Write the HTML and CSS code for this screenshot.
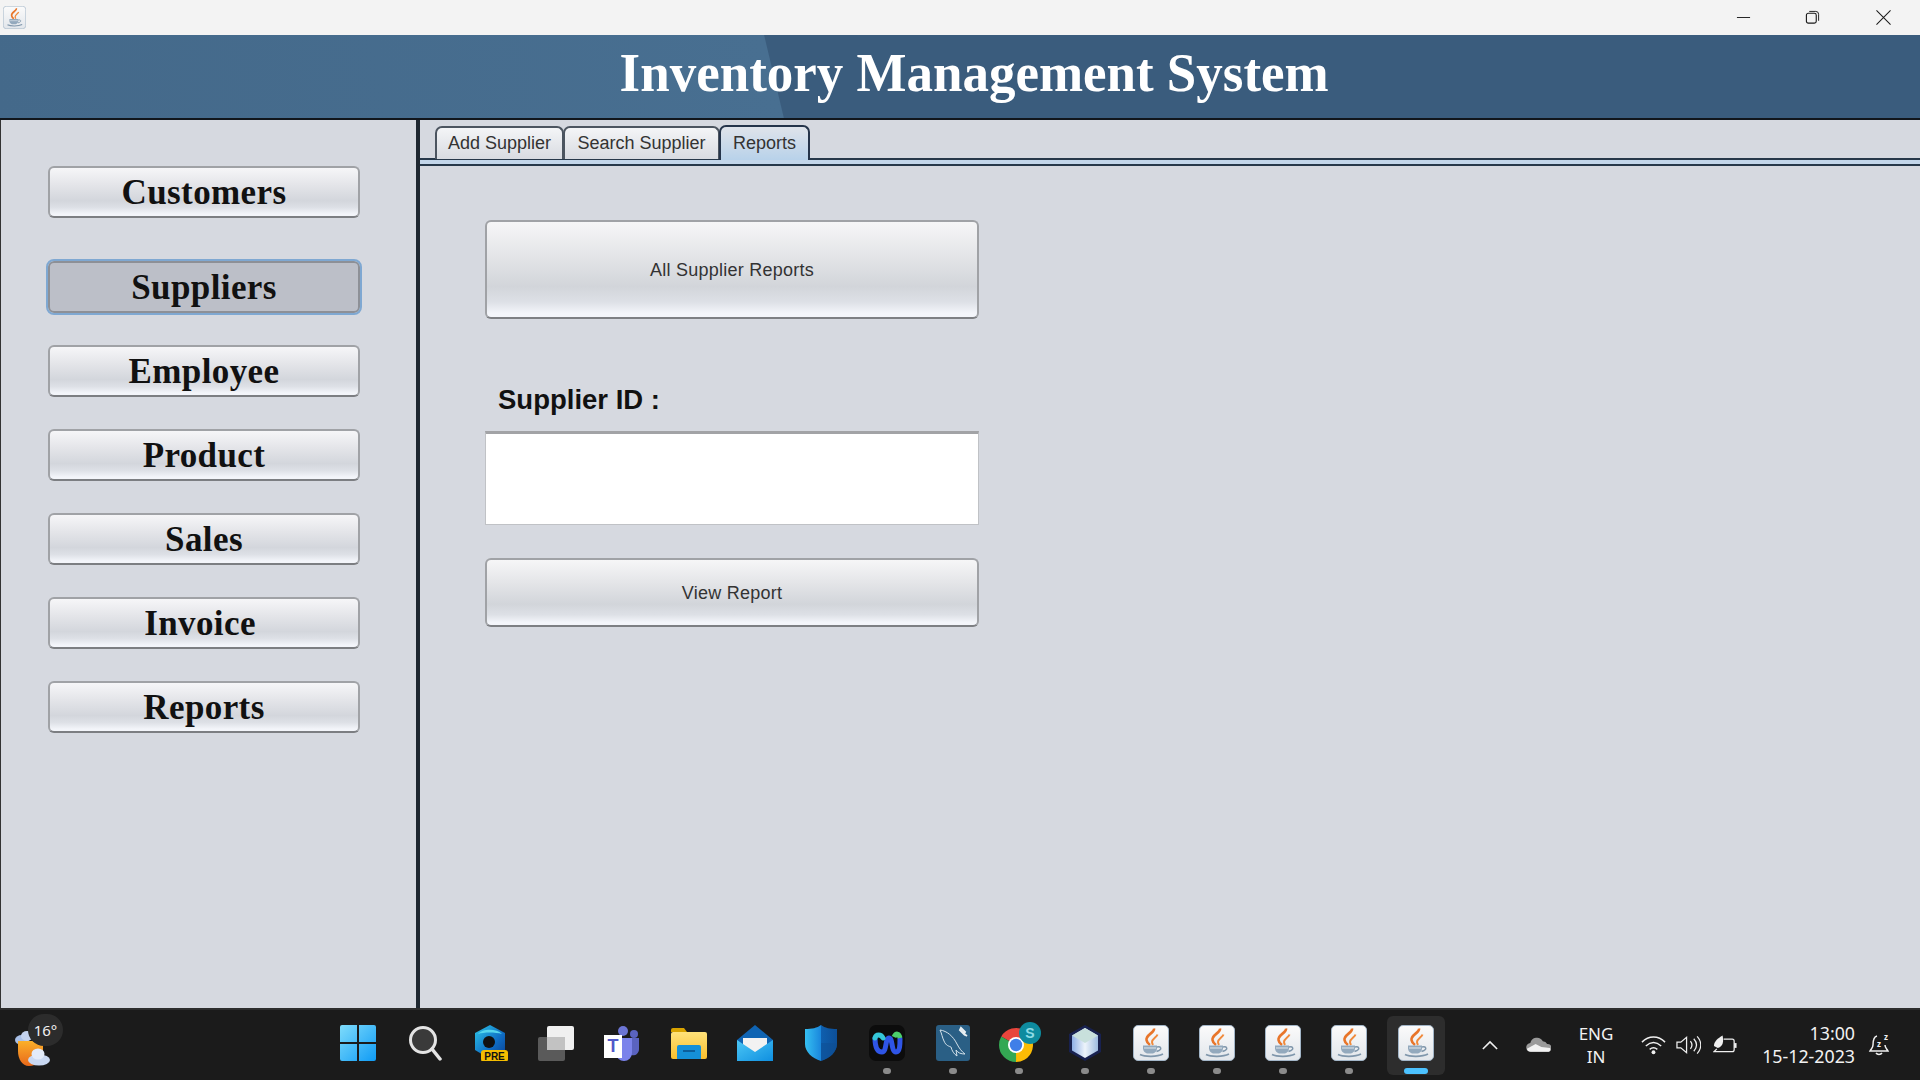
FILE: index.html
```html
<!DOCTYPE html>
<html lang="en">
<head>
<meta charset="utf-8">
<title>Inventory Management System</title>
<link rel="stylesheet" href="styles.css">
</head>
<body>
<svg class="defs" aria-hidden="true">
  <defs>
    <linearGradient id="javaBg" x1="0" y1="0" x2="0" y2="1"><stop offset="0" stop-color="#fbfbfb"/><stop offset="1" stop-color="#e2e6eb"/></linearGradient>
    <linearGradient id="winG" x1="0" y1="0" x2="1" y2="1"><stop offset="0" stop-color="#7fdcfb"/><stop offset="1" stop-color="#0f9bf5"/></linearGradient>
    <linearGradient id="edgeG" x1="0" y1="0" x2="1" y2="1"><stop offset="0" stop-color="#2dc7e8"/><stop offset=".6" stop-color="#0f6cc4"/><stop offset="1" stop-color="#0a3f8f"/></linearGradient>
    <linearGradient id="folderG" x1="0" y1="0" x2="0" y2="1"><stop offset="0" stop-color="#ffe27a"/><stop offset="1" stop-color="#fbc02d"/></linearGradient>
    <linearGradient id="mailG" x1="0" y1="0" x2="1" y2="1"><stop offset="0" stop-color="#4cc7f5"/><stop offset="1" stop-color="#0f8fe0"/></linearGradient>
    <linearGradient id="shieldG" x1="0" y1="0" x2="1" y2="0"><stop offset="0" stop-color="#35c0f2"/><stop offset=".5" stop-color="#1a86dc"/><stop offset=".5" stop-color="#0f5fae"/><stop offset="1" stop-color="#0d4f98"/></linearGradient>
    <linearGradient id="cubeG" x1="0" y1="0" x2="1" y2="0"><stop offset="0" stop-color="#8fb0e6"/><stop offset=".5" stop-color="#eef4fb"/><stop offset="1" stop-color="#9dbbe0"/></linearGradient>
    <linearGradient id="sunG" x1="0" y1="0" x2="0" y2="1"><stop offset="0" stop-color="#fbb02a"/><stop offset="1" stop-color="#e8681a"/></linearGradient>
    <symbol id="java" viewBox="0 0 36 36">
      <rect x=".5" y=".5" width="35" height="35" rx="4.500" fill="url(#javaBg)" stroke="#a3b6c8" stroke-width="1"/>
      <path d="M21 3.500c1 4-8.500 6.500-7.500 11.500 .3 2 2 4 3.500 5" fill="none" stroke="#e8752a" stroke-width="2.600"/>
      <path d="M24.500 9.500c-1 3-5.500 4-5.500 7.500 0 1 .5 2 1 3" fill="none" stroke="#f08a3c" stroke-width="2"/>
      <path d="M10 20.500h14v3c0 2.500-2 4.500-4 5h-6c-2-.5-4-2.500-4-5z" fill="#93a9bd"/>
      <path d="M11 23h12" stroke="#dfe6ec" stroke-width="1"/>
      <path d="M24 22c4-1 5 2 2 3.500l-2.500 1" fill="none" stroke="#7f96ab" stroke-width="1.400"/>
      <path d="M7 29.500c5 2.500 17 2.500 23-.5" fill="none" stroke="#7f96ab" stroke-width="1.800"/>
    </symbol>
  </defs>
</svg>
<div class="app">
  <div class="titlebar">
    <svg class="app-icon" viewBox="0 0 36 36"><use href="#java"/></svg>
    <div class="win-controls">
      <svg class="win-btn" viewBox="0 0 16 16"><path d="M1 8h14" stroke="#1a1a1a" fill="none" stroke-width="1"/></svg>
      <svg class="win-btn" viewBox="0 0 16 16"><rect x="1.500" y="3.500" width="10.500" height="10.500" rx="2" fill="none" stroke="#1a1a1a" stroke-width="1.200"/><path d="M4.500 1.500h7a3 3 0 0 1 3 3v7" fill="none" stroke="#1a1a1a" stroke-width="1"/></svg>
      <svg class="win-btn win-close" viewBox="0 0 16 16"><path d="M.5.500l15 15M15.500.500l-15 15" stroke="#1a1a1a" fill="none" stroke-width="1.100"/></svg>
    </div>
  </div>
  <header class="banner"><h1 class="banner-title">Inventory Management System</h1></header>
  <main class="workspace">
    <nav class="sidebar">
      <button class="nav-btn">Customers</button>
      <button class="nav-btn nav-btn-active">Suppliers</button>
      <button class="nav-btn">Employee</button>
      <button class="nav-btn">Product</button>
      <button class="nav-btn">Sales</button>
      <button class="nav-btn nav-btn-invoice">Invoice</button>
      <button class="nav-btn">Reports</button>
    </nav>
    <section class="content">
      <div class="tabs">
        <div class="tab tab-add">Add Supplier</div>
        <div class="tab tab-search">Search Supplier</div>
        <div class="tab tab-active">Reports</div>
      </div>
      <div class="tab-rule"></div>
      <div class="form">
        <button class="form-btn form-btn-all">All Supplier Reports</button>
        <label class="form-label" for="sid">Supplier ID :</label>
        <input class="form-input" id="sid" type="text">
        <button class="form-btn form-btn-view">View Report</button>
      </div>
    </section>
  </main>
  <footer class="taskbar">
    <div class="weather">
      <svg class="weather-icon" viewBox="0 0 40 44">
        <ellipse cx="8" cy="14" rx="7" ry="5" fill="#a9c0e8"/>
        <ellipse cx="13" cy="10" rx="6" ry="5" fill="#c4d3ef"/>
        <path d="M4 15h25v9c0 10-6 16-14 16C8 40 4 33 4 25z" fill="url(#sunG)"/>
        <ellipse cx="25" cy="34" rx="11" ry="5.500" fill="#c9d8f2"/>
        <ellipse cx="24" cy="28" rx="6.500" ry="5.500" fill="#e3ebf9"/>
      </svg>
      <span class="weather-badge">16°</span>
    </div>
    <div class="task-icons">
      <div class="task-item"><svg class="task-svg" viewBox="0 0 36 36"><path d="M0 2a2 2 0 0 1 2-2h15v17H0zM19 0h15a2 2 0 0 1 2 2v15H19zM0 19h17v17H2a2 2 0 0 1-2-2zM19 19h17v15a2 2 0 0 1-2 2H19z" fill="url(#winG)"/></svg></div>
      <div class="task-item"><svg class="task-svg" viewBox="0 0 36 36"><circle cx="17" cy="15" r="12.500" fill="#3a3a3a" stroke="#e4e4e4" stroke-width="3"/><path d="M26 24l8 10" stroke="#e4e4e4" stroke-width="3.500" stroke-linecap="round"/></svg></div>
      <div class="task-item"><svg class="task-svg" viewBox="0 0 36 36"><path d="M18 0l15 8v17l-15 9-15-9V8z" fill="url(#edgeG)"/><circle cx="17" cy="17" r="6" fill="#111"/><path d="M6 9c4-5 18-6 24 0-7-2-18-2-24 0z" fill="#56d6ee"/><rect x="9" y="25" width="27" height="12" rx="3" fill="#f5bd00"/><text x="22.500" y="34.500" class="pre-text">PRE</text></svg></div>
      <div class="task-item"><svg class="task-svg" viewBox="0 0 36 36"><rect x="0" y="12" width="27" height="24" rx="2" fill="#5a5a5a"/><rect x="9" y="1" width="27" height="24" rx="2" fill="#f0f0f0"/><rect x="9" y="12" width="18" height="13" fill="#c2c2c2"/></svg></div>
      <div class="task-item"><svg class="task-svg" viewBox="0 0 36 36"><circle cx="19" cy="6" r="5" fill="#6c75d4"/><circle cx="30" cy="9" r="4" fill="#5a63c0"/><path d="M23 13h12v11a6 6 0 0 1-8 6z" fill="#5a63c0"/><path d="M10 13h18v15a8 8 0 0 1-16 0z" fill="#7b83eb"/><rect x="0" y="10" width="18" height="23" fill="#fff"/><text x="9" y="27" class="teams-text">T</text></svg></div>
      <div class="task-item"><svg class="task-svg" viewBox="0 0 36 36"><path d="M0 5a2 2 0 0 1 2-2h11l3 4h-16z" fill="#d9a300"/><rect x="0" y="7" width="36" height="27" rx="2" fill="url(#folderG)"/><path d="M6 22a2 2 0 0 1 2-2h20a2 2 0 0 1 2 2v12H6z" fill="#1590d8"/><rect x="12" y="25" width="12" height="2" fill="#0b5f9c"/></svg></div>
      <div class="task-item"><svg class="task-svg" viewBox="0 0 36 36"><path d="M18 0l18 15v21H0V15z" fill="#0f64b3"/><path d="M6 13h24v9l-12 8-12-8z" fill="#f2f2f2"/><path d="M0 15l18 12 18-12v21H0z" fill="url(#mailG)"/></svg></div>
      <div class="task-item"><svg class="task-svg" viewBox="0 0 36 36"><path d="M18 0c4 3 9 4 16 4v15c0 8-7 14-16 17C9 33 2 27 2 19V4c7 0 12-1 16-4z" fill="url(#shieldG)"/><path d="M2 18h32c0 .5 0 1 0 1 0 8-7 14-16 17V18z" fill="#0f4f94" opacity=".55"/></svg></div>
      <div class="task-item task-open"><svg class="task-svg" viewBox="0 0 36 36"><rect width="36" height="36" rx="7" fill="#0c0c0c"/><path d="M6 13c0 10 3 14 7 14 5 0 3-14 7-14 4 0 2 14 7 14 4 0 4-8 4-13" fill="none" stroke="#2f55e6" stroke-width="5" stroke-linecap="round"/><path d="M6 13c1-4 6-4 8 0" fill="none" stroke="#35c7d8" stroke-width="5" stroke-linecap="round"/><path d="M25 12c2-4 5-4 6 1" fill="none" stroke="#4ccf6a" stroke-width="5"/></svg></div>
      <div class="task-item task-open"><svg class="task-svg" viewBox="0 0 36 36"><rect width="34" height="36" x="1" rx="3" fill="#2a5f85"/><path d="M5 5c7 1 13 6 17 14 2 4 5 8 8 10-4 0-7-1-9-4l1 6c-3-2-5-5-6-9-2-1-5-1-7-6C7 12 7 9 5 5z" fill="none" stroke="#d3e1ea" stroke-width="1"/><path d="M26 3l4 4-1 2-4-4zM29 9l3 2" stroke="#e8eef2" stroke-width="2" fill="none"/></svg></div>
      <div class="task-item task-open"><svg class="task-svg task-chrome" viewBox="0 0 36 36">
        <circle cx="15" cy="20" r="12" fill="none" stroke="#e8453c" stroke-width="10" pathLength="3" stroke-dasharray="1 2" transform="rotate(-150 15 20)"/>
        <circle cx="15" cy="20" r="12" fill="none" stroke="#fbbc05" stroke-width="10" pathLength="3" stroke-dasharray="1 2" transform="rotate(-30 15 20)"/>
        <circle cx="15" cy="20" r="12" fill="none" stroke="#34a853" stroke-width="10" pathLength="3" stroke-dasharray="1 2" transform="rotate(90 15 20)"/>
        <circle cx="15" cy="20" r="8" fill="#fff"/><circle cx="15" cy="20" r="6.200" fill="#3f7fe8"/>
        <circle cx="29" cy="8" r="11" fill="#0e8b9f"/><text x="29" y="13" class="s-text">S</text></svg></div>
      <div class="task-item task-open"><svg class="task-svg" viewBox="0 0 36 36"><path d="M18 0l16 9v18l-16 9-16-9V9z" fill="#18214f"/><path d="M18 3l13 7.500v15L18 33 5 25.500v-15z" fill="url(#cubeG)"/><path d="M18 3l13 7.500L18 18 5 10.500z" fill="#c8e0dc"/></svg></div>
      <div class="task-item task-open"><svg class="task-svg" viewBox="0 0 36 36"><use href="#java"/></svg></div>
      <div class="task-item task-open"><svg class="task-svg" viewBox="0 0 36 36"><use href="#java"/></svg></div>
      <div class="task-item task-open"><svg class="task-svg" viewBox="0 0 36 36"><use href="#java"/></svg></div>
      <div class="task-item task-open"><svg class="task-svg" viewBox="0 0 36 36"><use href="#java"/></svg></div>
      <div class="task-item task-current"><svg class="task-svg" viewBox="0 0 36 36"><use href="#java"/></svg></div>
    </div>
    <div class="tray">
      <svg class="tray-chevron" viewBox="0 0 18 12"><path d="M1 10l8-8 8 8" fill="none" stroke="#f0f0f0" stroke-width="1.800"/></svg>
      <svg class="tray-cloud" viewBox="0 0 26 16"><path d="M5 15a4.500 4.500 0 0 1-.5-9 7 7 0 0 1 13-2 5.500 5.500 0 0 1 4.500 3 4 4 0 0 1 1 8z" fill="#9a9a9a"/><path d="M1 12l9-5 6 3 9 1c1 3-1 4-2 4H5c-2 0-4-1-4-3z" fill="#f2f2f2"/></svg>
      <div class="tray-lang"><span>ENG</span><span>IN</span></div>
      <svg class="tray-wifi" viewBox="0 0 26 20"><path d="M1 7c7-7 17-7 24 0M5 11c5-4.500 11-4.500 16 0M9 14.500c2.500-2 5.500-2 8 0" fill="none" stroke="#f0f0f0" stroke-width="1.500"/><circle cx="13" cy="17.500" r="2" fill="#f0f0f0"/></svg>
      <svg class="tray-sound" viewBox="0 0 26 20"><path d="M1 7h4l6-5v16l-6-5H1z" fill="none" stroke="#f0f0f0" stroke-width="1.300"/><path d="M15 6c2 2.500 2 5.500 0 8M18.500 3.500c3.500 4 3.500 9 0 13M22 1c5 5.500 5 12.500 0 18" fill="none" stroke="#f0f0f0" stroke-width="1.300"/></svg>
      <svg class="tray-battery" viewBox="0 0 26 20"><path d="M11 4h9a2 2 0 0 1 2 2v9a2 2 0 0 1-2 2H1l3-3" fill="none" stroke="#f0f0f0" stroke-width="1.300"/><path d="M22 8h2.500v5H22" fill="#f0f0f0"/><path d="M1 11C1 6 5 3 10 0c1 6 1 11-5 13z" fill="#f0f0f0"/></svg>
      <div class="tray-clock"><span>13:00</span><span>15-12-2023</span></div>
      <svg class="tray-bell" viewBox="0 0 24 24"><path d="M9 3C5 4 5 9 5 12c0 3-2 4-3 6h18c-1-2-3-3-3-6" fill="none" stroke="#f0f0f0" stroke-width="1.500"/><path d="M8 20a3.500 3 0 0 0 6 0" fill="none" stroke="#f0f0f0" stroke-width="1.500"/><text x="11" y="14" class="zz-a">z</text><text x="18" y="7" class="zz-b">z</text></svg>
    </div>
  </footer>
</div>
</body>
</html>
```
FILE: styles.css
```css
* { box-sizing: border-box; }
html, body { margin: 0; padding: 0; height: 100%; overflow: hidden; }
body { font-family: "Liberation Sans", Arial, sans-serif; background: #d6d9e0; }
.defs { position: absolute; width: 0; height: 0; }
.app { display: flex; flex-direction: column; width: 1920px; height: 1080px; }

.titlebar { display: flex; align-items: center; justify-content: space-between; height: 35px; flex: none; background: #f3f3f3; padding-left: 3px; }
.app-icon { width: 23px; height: 23px; }
.win-controls { display: flex; align-items: center; gap: 54px; padding-right: 29px; }
.win-btn { width: 15px; height: 15px; display: block; }
.win-close { margin-left: 2px; }

.banner { flex: none; height: 85px; border-bottom: 2px solid #11161c; display: flex; align-items: center; justify-content: center; background: linear-gradient(76.6deg, #44698a 0, #486f91 762px, #3a5c7d 763px); padding-left: 29px; }
.banner-title { margin: 0; font-family: "Liberation Serif", "Times New Roman", serif; font-weight: 700; font-size: 55px; color: #fff; line-height: 1; padding-bottom: 9px; transform: scaleX(.963); white-space: nowrap; }

.workspace { flex: 1; display: flex; min-height: 0; background: #d6d9e0; }
.sidebar { width: 418px; flex: none; display: flex; flex-direction: column; align-items: flex-start; padding: 46px 0 0 49px; gap: 32px; border-left: 1px solid #333; border-right: 2px solid #1e2730; }
.nav-btn { width: 312px; height: 52px; margin-left: -2px; border: 2px solid #a0a2a6; border-bottom-color: #7c7e82; border-radius: 6px; font-family: "Liberation Serif", "Times New Roman", serif; font-weight: 700; font-size: 35px; letter-spacing: .4px; color: #111; background: linear-gradient(#f6f6f8 0, #e4e5e9 35%, #d3d6dc 68%, #dde0e6 82%, #f3f5fa 96%); padding: 1px 0 0; }
.nav-btn-active { margin-top: 11px; background: #bcbfc8; border-color: #8d9097; outline: 2px solid #7fa8d2; outline-offset: 0; padding-top: 2px; }
.nav-btn-invoice { padding-right: 8px; }

.content { flex: 1; display: flex; flex-direction: column; min-width: 0; border-left: 2px solid #1e2730; }
.tabs { flex: none; height: 40px; display: flex; align-items: flex-end; padding-left: 15px; border-bottom: 2px solid #27384a; }
.tab { height: 33px; margin-bottom: -1px; border: 2px solid #4c5560; border-bottom: none; border-radius: 7px 7px 0 0; background: linear-gradient(#f4f5f7, #d8dbe1); display: flex; align-items: center; justify-content: center; font-size: 18px; color: #333; }
.tab-add { width: 129px; }
.tab-search { width: 157px; margin-left: -1px; }
.tab-active { width: 91px; margin-left: -1px; height: 35px; margin-bottom: -2px; background: linear-gradient(#dfe3ea, #b8d2ea); border-color: #25344a; }
.tab-rule { flex: none; height: 6px; background: #c3d6ea; border-bottom: 2px solid #27384a; }

.form { display: flex; flex-direction: column; align-items: flex-start; padding: 54px 0 0 65px; }
.form-btn { width: 494px; border: 2px solid #a0a2a6; border-bottom-color: #7d7f83; border-radius: 6px; font-family: "Liberation Sans", Arial, sans-serif; font-size: 18px; letter-spacing: .25px; color: #333; padding: 2px 0 0; background: linear-gradient(#f6f6f7 0, #e4e5e8 35%, #d2d5da 68%, #dde0e6 84%, #f3f5fa 96%); }
.form-btn-all { height: 99px; }
.form-btn-view { height: 69px; margin-top: 33px; }
.form-label { margin: 66px 0 0 13px; height: 46px; font-weight: 700; font-size: 27.5px; color: #111; line-height: 30px; }
.form-input { width: 494px; height: 94px; border: 1px solid #c0c2c6; border-top: 3px solid #a2a3a6; background: #fff; padding: 0; }

.taskbar { flex: none; height: 72px; display: flex; align-items: stretch; background: #1b1b1b; border-top: 2px solid #2d2d2d; color: #f2f2f2; font-family: "Noto Sans", "Open Sans", sans-serif; }
.weather { flex: none; width: 325px; position: relative; }
.weather-icon { position: absolute; left: 14px; top: 16px; width: 40px; height: 44px; }
.weather-badge { position: absolute; left: 28px; top: 4px; width: 35px; height: 32px; border-radius: 16px; background: #2c2c2c; font-size: 15px; display: flex; align-items: center; justify-content: center; }

.task-icons { flex: none; display: flex; width: 1126px; }
.task-item { flex: none; width: 66.1px; position: relative; display: flex; align-items: center; justify-content: center; padding-bottom: 4px; }
.task-svg { width: 36px; height: 36px; display: block; }
.task-chrome { overflow: visible; }
.task-open::after { content: ""; position: absolute; left: 29px; bottom: 6px; width: 8px; height: 6px; border-radius: 3px; background: #8b8b8b; }
.task-current::before { content: ""; position: absolute; left: 4px; right: 4px; top: 6px; bottom: 5px; border-radius: 6px; background: #2d2d2d; }
.task-current .task-svg { position: relative; }
.task-current::after { content: ""; position: absolute; left: 21px; bottom: 6px; width: 24px; height: 6px; border-radius: 3px; background: #4cc2ff; }
.pre-text { font: 700 10px "Liberation Sans", sans-serif; text-anchor: middle; fill: #111; }
.teams-text { font: 700 18px "Liberation Sans", sans-serif; text-anchor: middle; fill: #5059c9; }
.s-text { font: 700 14px "Liberation Sans", sans-serif; text-anchor: middle; fill: #8fdbe6; }

.tray { flex: 1; display: flex; align-items: center; position: relative; font-size: 17.8px; line-height: 23px; }
.tray-chevron { width: 16px; height: 11px; margin-left: 31px; }
.tray-cloud { width: 25px; height: 16px; margin-left: 28px; }
.tray-lang { display: flex; flex-direction: column; align-items: center; width: 40px; margin-left: 25px; font-size: 17px; }
.tray-wifi { width: 25px; height: 20px; margin-left: 25px; }
.tray-sound { width: 25px; height: 20px; margin-left: 10px; }
.tray-battery { width: 25px; height: 20px; margin-left: 12px; }
.tray-clock { display: flex; flex-direction: column; align-items: flex-end; width: 110px; margin-left: 7px; }
.tray-bell { width: 24px; height: 26px; margin-left: 13px; }
.zz-a { font: 700 8px "Noto Sans", sans-serif; fill: #f0f0f0; text-anchor: middle; }
.zz-b { font: 700 8px "Noto Sans", sans-serif; fill: #f0f0f0; text-anchor: middle; }
```
